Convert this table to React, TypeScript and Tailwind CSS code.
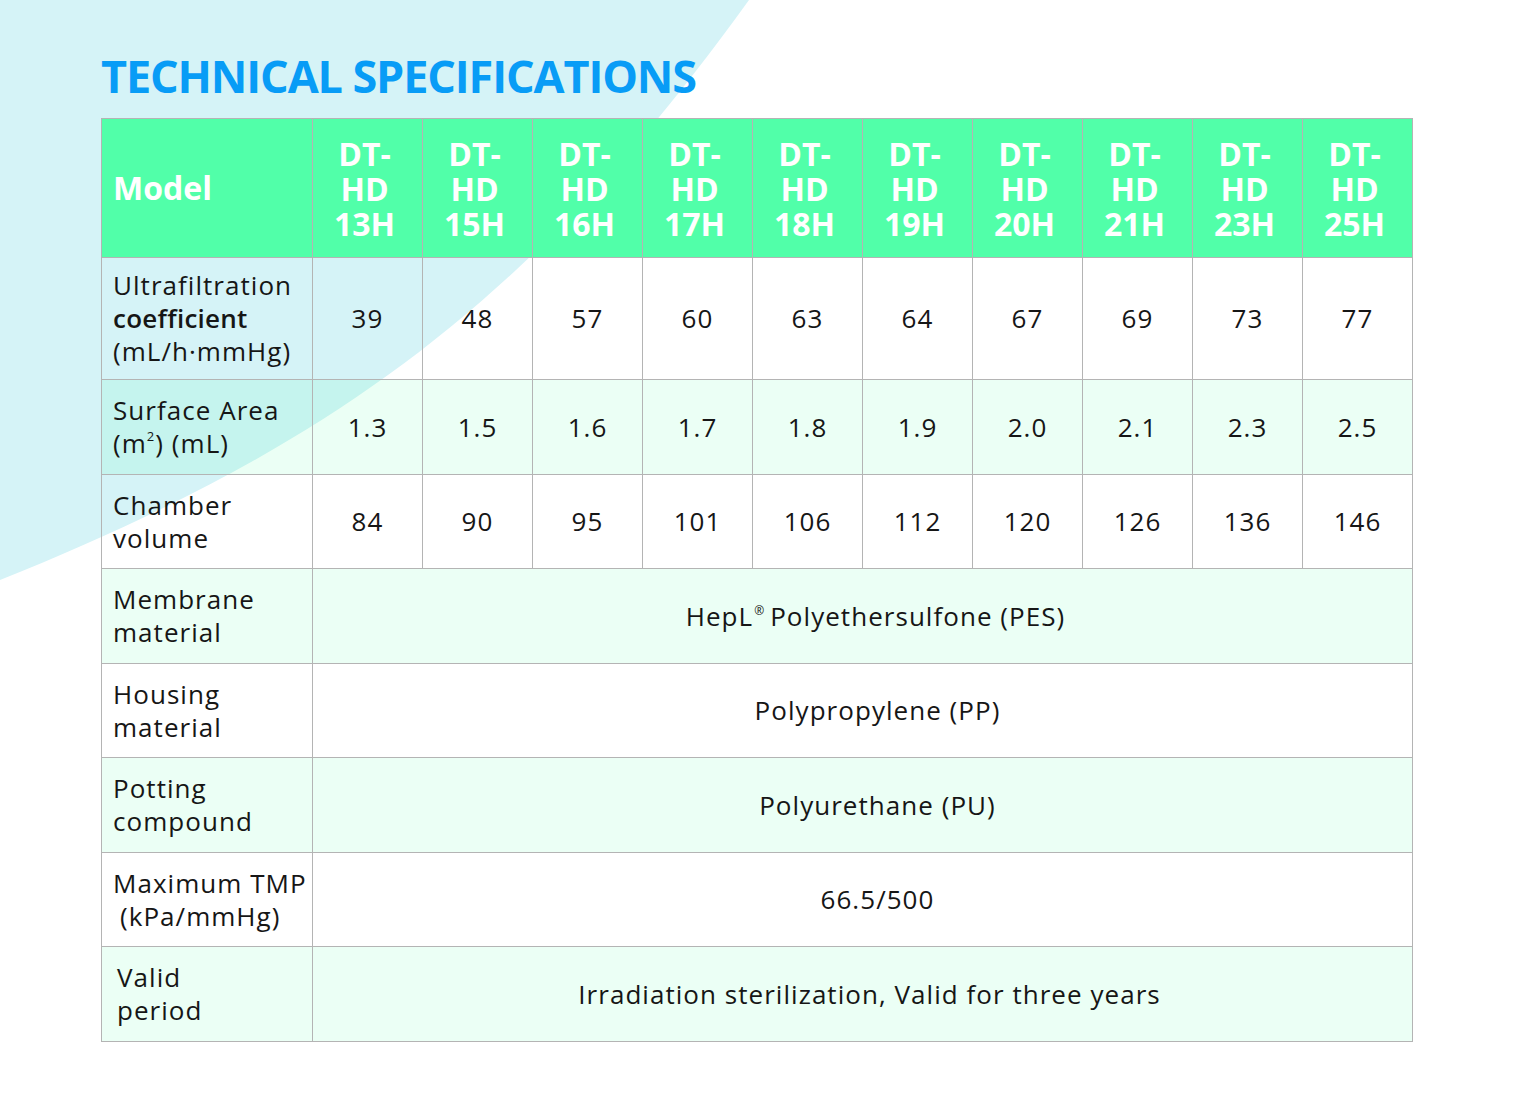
import React from "react";

const models = ["13H", "15H", "16H", "17H", "18H", "19H", "20H", "21H", "23H", "25H"];
const uf = ["39", "48", "57", "60", "63", "64", "67", "69", "73", "77"];
const sa = ["1.3", "1.5", "1.6", "1.7", "1.8", "1.9", "2.0", "2.1", "2.3", "2.5"];
const cv = ["84", "90", "95", "101", "106", "112", "120", "126", "136", "146"];

const font = { fontFamily: '"Open Sans", "Noto Sans", sans-serif' };

function Label({ children, className = "" }: { children: React.ReactNode; className?: string }) {
  return (
    <div
      className={`border-r border-b border-[#b4b4b4] flex flex-col justify-center text-[26px] leading-[33px] tracking-[0.04em] text-[#161616] ${className}`}
    >
      {children}
    </div>
  );
}

function Val({ children, className = "" }: { children: React.ReactNode; className?: string }) {
  return (
    <div
      className={`border-r border-b border-[#b4b4b4] flex items-center justify-center text-[26px] tracking-[0.04em] text-[#161616] ${className}`}
    >
      {children}
    </div>
  );
}

export default function App() {
  const green = "bg-[rgba(80,255,168,0.115)]";
  return (
    <div className="relative w-[1513px] h-[1105px] bg-white overflow-hidden" style={font}>
      <svg className="absolute left-0 top-0" width="760" height="600" viewBox="0 0 760 600">
        <path d="M0 0 L749 0 C533 300, 334 446, 0 580 Z" fill="#d5f3f7" />
      </svg>
      <div className="relative pl-[101px] pt-[48px]">
        <h1 className="text-[45px] leading-[56px] font-bold text-[#089cf6] tracking-[-0.025em] mb-[14px]">
          TECHNICAL SPECIFICATIONS
        </h1>
        <div className="grid grid-cols-[211px_repeat(10,110px)] grid-rows-[139px_122px_95px_94px_95px_94px_95px_94px_95px] w-[1312px] border-l border-t border-[#b4b4b4]">
          {/* header */}
          <div className="border-r border-b border-[#b4b4b4] bg-[#51ffa9] flex items-center pl-[11px] text-white font-bold text-[32px]">
            Model
          </div>
          {models.map((m) => (
            <div
              key={m}
              className="border-r border-b border-[#b4b4b4] bg-[#51ffa9] flex flex-col items-center justify-center text-white font-bold text-[32px] leading-[35px] pr-[6px]"
            >
              <span className="h-[35px]">DT-</span>
              <span className="h-[35px]">HD</span>
              <span className="h-[35px]">{m}</span>
            </div>
          ))}

          {/* row 1 */}
          <Label className="pl-[11px]">
            <span>Ultrafiltration</span>
            <span className="font-semibold tracking-[0.01em]">coefficient</span>
            <span>(mL/h·mmHg)</span>
          </Label>
          {uf.map((v, i) => (
            <Val key={i}>{v}</Val>
          ))}

          {/* row 2 */}
          <Label className={`pl-[11px] ${green}`}>
            <span>Surface Area</span>
            <span>
              (m<span className="inline-block text-[13px] leading-[13px] align-top relative top-[3px]">2</span>) (mL)
            </span>
          </Label>
          {sa.map((v, i) => (
            <Val key={i} className={green}>
              {v}
            </Val>
          ))}

          {/* row 3 */}
          <Label className="pl-[11px]">
            <span>Chamber</span>
            <span>volume</span>
          </Label>
          {cv.map((v, i) => (
            <Val key={i}>{v}</Val>
          ))}

          {/* row 4 */}
          <Label className={`pl-[11px] ${green}`}>
            <span>Membrane</span>
            <span>material</span>
          </Label>
          <Val className={`col-span-10 pl-[26px] ${green}`}>
            <span>
              HepL<span className="text-[12px] relative -top-[11px] mr-[5px] ml-[1px]">®</span>Polyethersulfone (PES)
            </span>
          </Val>

          {/* row 5 */}
          <Label className="pl-[11px]">
            <span>Housing</span>
            <span>material</span>
          </Label>
          <Val className="col-span-10 pl-[30px]">Polypropylene (PP)</Val>

          {/* row 6 */}
          <Label className={`pl-[11px] ${green}`}>
            <span>Potting</span>
            <span>compound</span>
          </Label>
          <Val className={`col-span-10 pl-[30px] ${green}`}>Polyurethane (PU)</Val>

          {/* row 7 */}
          <Label className="pl-[11px]">
            <span>Maximum TMP</span>
            <span className="pl-[7px]">(kPa/mmHg)</span>
          </Label>
          <Val className="col-span-10 pl-[30px]">66.5/500</Val>

          {/* row 8 */}
          <Label className={`pl-[15px] ${green}`}>
            <span>Valid</span>
            <span>period</span>
          </Label>
          <Val className={`col-span-10 pl-[14px] ${green}`}>
            Irradiation sterilization, Valid for three years
          </Val>
        </div>
      </div>
    </div>
  );
}
